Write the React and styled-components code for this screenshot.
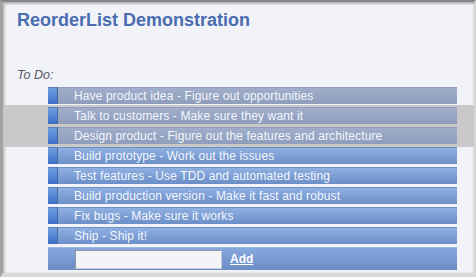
import React from "react";
import styled, { createGlobalStyle } from "styled-components";

const GlobalStyle = createGlobalStyle`
  html, body {
    margin: 0;
    padding: 0;
    background: #f1f3f8;
  }
`;

const Frame = styled.div`
  position: relative;
  box-sizing: border-box;
  width: 476px;
  height: 277px;
  overflow: hidden;
  background: #f1f3f8;
  border-top: 2px solid #858585;
  border-left: 3px solid #a2a2a2;
  border-right: 2px solid #d6d6d6;
  border-bottom: 4px solid #dadada;
  box-shadow: inset 0 2px 2px #b4b4b4, inset 2px 0 2px #cacaca;
  padding: 7px 0 0 14px;
  font-family: "Liberation Sans", Arial, sans-serif;
`;

const Title = styled.h1`
  margin: 0;
  font-size: 18px;
  line-height: 22px;
  font-weight: bold;
  color: #4a6cb0;
`;

const Label = styled.div`
  margin-top: 37px;
  font-size: 12.5px;
  line-height: 15px;
  font-style: italic;
  color: #555a63;
`;

// dimmed band left behind by a drag in progress
const DragBand = styled.div`
  position: absolute;
  left: 0;
  right: 0;
  top: 103px;
  height: 42px;
  background: #c9c9ca;
  z-index: 0;
`;

const List = styled.ul`
  position: relative;
  z-index: 1;
  list-style: none;
  margin: 4px 0 0 31px;
  padding: 0;
  width: 409px;
`;

const Row = styled.li`
  display: flex;
  height: 17px;
  margin-bottom: 3px;
`;

const Handle = styled.div`
  width: 10px;
  flex: none;
  background: linear-gradient(#6f9fe2, #3b6fc6);
  border-right: 1px solid #46659a;
  border-top: 1px solid #5a7fbc;
  box-sizing: border-box;
`;

const Body = styled.div`
  flex: 1;
  box-sizing: border-box;
  padding-left: 16px;
  font-size: 12px;
  letter-spacing: 0.12px;
  line-height: 16px;
  color: #f4f7fc;
  white-space: nowrap;
  border-top: 1px solid ${(p) => (p.$dim ? "#8f9cb6" : "#6f8fc4")};
  background: ${(p) =>
    p.$dim
      ? "linear-gradient(#a0aecb, #8e9dbb)"
      : "linear-gradient(#8fb0e2, #6b8ec8)"};
`;

const AddRow = styled.div`
  display: flex;
  align-items: center;
  height: 23px;
  box-sizing: border-box;
  padding-left: 27px;
  gap: 8px;
  border-top: 1px solid #9bb6e0;
  background: linear-gradient(#86a8de, #6a8dc6);
`;

const Input = styled.input`
  width: 147px;
  height: 19px;
  box-sizing: border-box;
  margin: 0;
  padding: 0 3px;
  border: 1px solid #8e96a4;
  border-right-color: #c8ccd4;
  border-bottom-color: #c8ccd4;
  background: #f2f4f8;
  font-family: inherit;
  font-size: 12px;
`;

const AddLink = styled.a`
  font-size: 12px;
  font-weight: bold;
  color: #ffffff;
  text-decoration: underline;
  cursor: pointer;
`;

const items = [
  "Have product idea - Figure out opportunities",
  "Talk to customers - Make sure they want it",
  "Design product - Figure out the features and architecture",
  "Build prototype - Work out the issues",
  "Test features - Use TDD and automated testing",
  "Build production version - Make it fast and robust",
  "Fix bugs - Make sure it works",
  "Ship - Ship it!",
];

export default function App() {
  return (
    <>
      <GlobalStyle />
      <Frame>
        <Title>ReorderList Demonstration</Title>
        <Label>To Do:</Label>
        <DragBand />
        <List>
          {items.map((text, i) => (
            <Row key={text}>
              <Handle />
              <Body $dim={i < 3}>{text}</Body>
            </Row>
          ))}
          <li>
            <AddRow>
              <Input type="text" />
              <AddLink>Add</AddLink>
            </AddRow>
          </li>
        </List>
      </Frame>
    </>
  );
}
